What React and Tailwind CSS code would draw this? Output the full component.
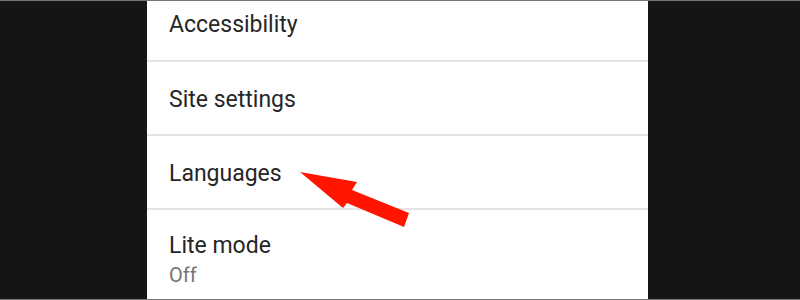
export default function App() {
  return (
    <div className="h-[300px] w-[800px] bg-[#151515] border-y border-[#777777] overflow-hidden" style={{ fontFamily: "Roboto, 'Noto Sans', sans-serif" }}>
      <div className="relative ml-[147px] w-[501px] h-full bg-white text-[#262626]">
        <div className="h-[61px] border-b-2 border-[#e4e4e4] pl-[22px] pt-[10px]">
          <div className="text-[23px] leading-[28px]">Accessibility</div>
        </div>
        <div className="h-[74px] border-b-2 border-[#e4e4e4] pl-[22px] pt-[24px]">
          <div className="text-[23px] leading-[28px]">Site settings</div>
        </div>
        <div className="h-[74px] border-b-2 border-[#e4e4e4] pl-[22px] pt-[24px]">
          <div className="text-[23px] leading-[28px]">Languages</div>
        </div>
        <div className="pl-[22px] pt-[22px]">
          <div className="text-[23px] leading-[28px]">Lite mode</div>
          <div className="mt-[2px] text-[20px] leading-[26px] text-[#757575]">Off</div>
        </div>
        <svg className="absolute left-0 top-[-1px]" width="501" height="300" viewBox="147 0 501 300">
          <polygon points="300,172 357,182 352,190 409,213 404,227 347,203 343,208" fill="#ff1500" />
        </svg>
      </div>
    </div>
  );
}
